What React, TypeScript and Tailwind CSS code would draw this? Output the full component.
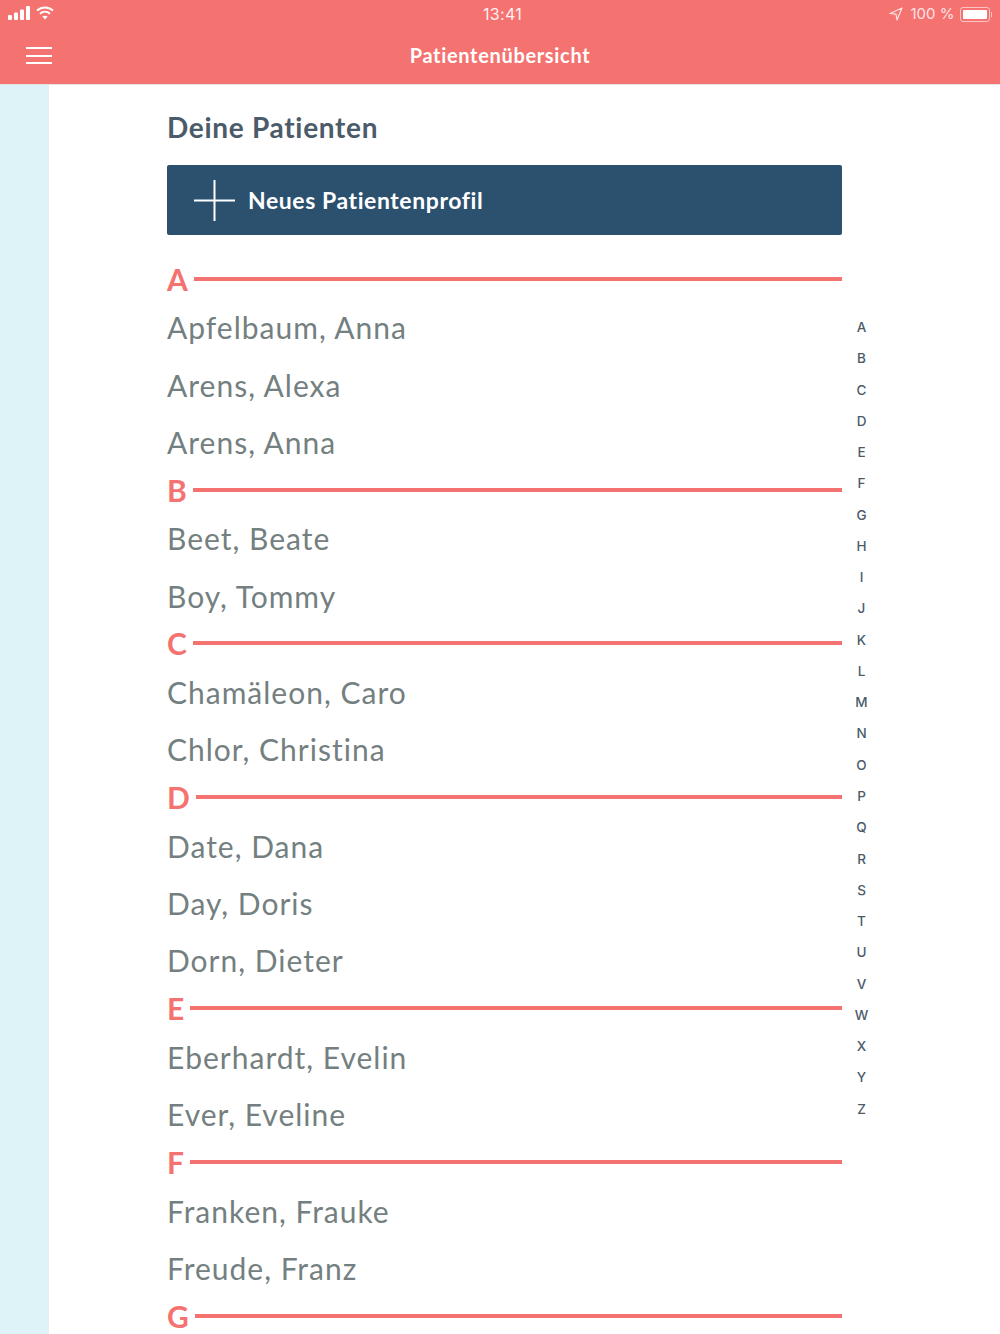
const sections: [string, string[]][] = [
  ["A", ["Apfelbaum, Anna", "Arens, Alexa", "Arens, Anna"]],
  ["B", ["Beet, Beate", "Boy, Tommy"]],
  ["C", ["Chamäleon, Caro", "Chlor, Christina"]],
  ["D", ["Date, Dana", "Day, Doris", "Dorn, Dieter"]],
  ["E", ["Eberhardt, Evelin", "Ever, Eveline"]],
  ["F", ["Franken, Frauke", "Freude, Franz"]],
  ["G", []],
];
const alphabet = "ABCDEFGHIJKLMNOPQRSTUVWXYZ".split("");

function StatusBar() {
  return (
    <div className="h-[28px] flex items-center justify-between pl-[8px] pr-[8px] relative text-white font-['Inter',sans-serif] text-[15px]">
      <div className="flex items-center gap-[6px] -translate-y-[1px]">
        <svg width="22" height="14" viewBox="0 0 22 14" fill="white">
          <rect x="0" y="9" width="4" height="5" rx="1" />
          <rect x="6" y="6.5" width="4" height="7.5" rx="1" />
          <rect x="12" y="3.5" width="4" height="10.5" rx="1" />
          <rect x="18" y="0" width="4" height="14" rx="1" />
        </svg>
        <svg width="18" height="14" viewBox="0 0 18 14" fill="none" stroke="white" strokeWidth="2">
          <path d="M1 4.6C5.6 0.3 12.4 0.3 17 4.6" />
          <path d="M4 7.8C6.9 5.2 11.1 5.2 14 7.8" />
          <path d="M9 13.5L6.4 10.6C7.9 9.5 10.1 9.5 11.6 10.6Z" fill="white" stroke="none" />
        </svg>
      </div>
      <span className="absolute left-0 right-0 top-[2px] text-center pl-[5px] text-[16px] tracking-[0.3px] text-[#fff0f0]">13:41</span>
      <div className="flex items-center text-[#fde3e3]">
        <svg width="14" height="14" viewBox="0 0 14 14" fill="none" stroke="#fde3e3" strokeWidth="1.2" className="mr-[8px]">
          <path d="M13 1L1 6.5L7 7.2L8 13Z" strokeLinejoin="round" />
        </svg>
        <span className="mr-[5px]">100 %</span>
        <div className="w-[30px] h-[15px] border border-[#fbc4c4] rounded-[3px] p-[2px]">
          <div className="w-full h-full bg-white rounded-[1px]" />
        </div>
        <div className="w-[1.5px] h-[5px] bg-[#fbc4c4] ml-[1px]" />
      </div>
    </div>
  );
}

function Header() {
  return (
    <header className="h-[85px] bg-[#f47270] border-b border-[#e5e5e5] flex flex-col">
      <StatusBar />
      <div className="relative flex-1 flex items-center justify-center -mt-[1px]">
        <div className="absolute left-[26px] top-[20px] w-[26px] flex flex-col gap-[5.5px]">
          <div className="h-[2px] bg-white" />
          <div className="h-[2px] bg-white" />
          <div className="h-[2px] bg-white" />
        </div>
        <h1 className="text-white text-[20px] tracking-[0.67px] font-bold font-['Lato',sans-serif] -translate-y-[1px]">Patientenübersicht</h1>
      </div>
    </header>
  );
}

export default function App() {
  return (
    <div className="w-[1000px] h-[1334px] overflow-hidden bg-white flex flex-col font-['Lato',sans-serif]">
      <Header />
      <div className="flex flex-1 min-h-0">
        <aside className="w-[49px] bg-[#ddf3f7] border-r border-[#e8eff1]" />
        <main className="w-[793px] pl-[118px]">
          <h2 className="h-[80px] pt-[23px] text-[28px] leading-[38px] tracking-[0.7px] font-bold text-[#4b5b69]">Deine Patienten</h2>
          <button className="w-full h-[70px] bg-[#2b516e] rounded-[2px] flex items-center pl-[27px] text-white text-[23px] tracking-[0.57px] font-bold">
            <svg width="41" height="41" viewBox="0 0 41 41" stroke="white" strokeWidth="2" className="mr-[13px]">
              <path d="M20.5 0V41M0 20.5H41" />
            </svg>
            Neues Patientenprofil
          </button>
          <div className="mt-[23px]">
            {sections.map(([letter, names]) => (
              <section key={letter}>
                <div className="h-[39.25px] flex items-center gap-[6px]">
                  <span className="text-[30px] leading-[30px] font-bold text-[#f47270] translate-y-[1px]">{letter}</span>
                  <div className="flex-1 h-[4px] bg-[#f47270] translate-y-[1px]" />
                </div>
                {names.map((n) => (
                  <div key={n} className="h-[57.25px] flex items-center text-[30px] tracking-[1px] text-[#74807f] translate-y-[2px]">
                    {n}
                  </div>
                ))}
              </section>
            ))}
          </div>
        </main>
        <nav className="w-[39px] pt-[227px] flex flex-col items-center font-['Inter',sans-serif] font-medium text-[13.5px] text-[#4b5b69]">
          {alphabet.map((l) => (
            <div key={l} className="h-[31.28px] leading-[31.28px] shrink-0">{l}</div>
          ))}
        </nav>
      </div>
    </div>
  );
}
